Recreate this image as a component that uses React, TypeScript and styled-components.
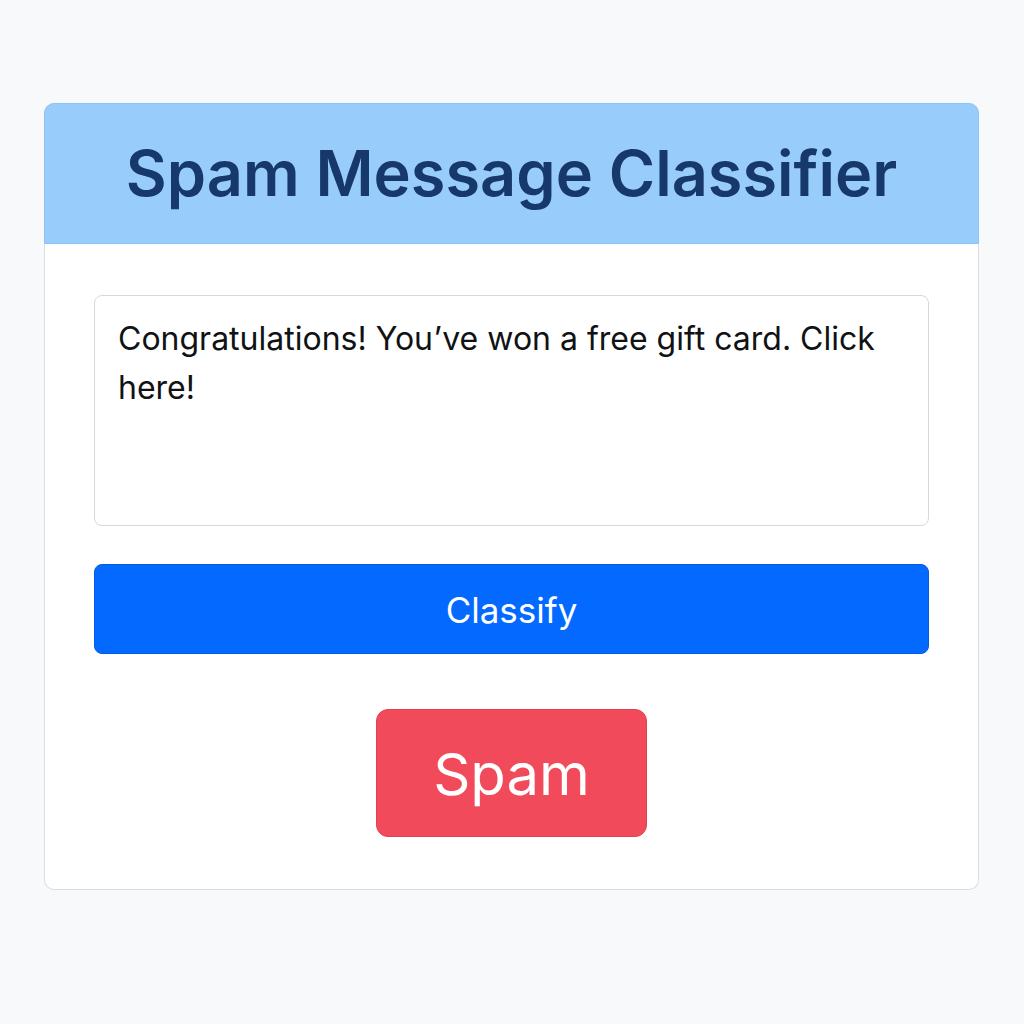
import React, { useState } from 'react';
import styled, { createGlobalStyle } from 'styled-components';

const GlobalStyle = createGlobalStyle`
  *, *::before, *::after { box-sizing: border-box; }
  body {
    margin: 0;
    background: #f7f9fb;
    font-family: Inter, "Liberation Sans", sans-serif;
  }
`;

const Page = styled.main`
  min-height: 100vh;
  padding: 103px 45px 103px 44px;
`;

const Card = styled.section`
  border-radius: 10px;
`;

const CardHeader = styled.header`
  padding: 29px 24px 30px;
  border: 1px solid #8cc3f3;
  border-radius: 10px 10px 0 0;
  background: #98cdfb;
  text-align: center;
`;

const Title = styled.h1`
  margin: 0;
  color: #17386a;
  font-size: 63px;
  line-height: 80px;
  font-weight: 600;
`;

const CardBody = styled.form`
  display: flex;
  flex-direction: column;
  padding: 51px 49px 52px;
  border: 1px solid #dadee2;
  border-top: 0;
  border-radius: 0 0 10px 10px;
  background: #ffffff;
`;

const MessageInput = styled.textarea`
  display: block;
  width: 100%;
  height: 231px;
  margin-bottom: 38px;
  padding: 18px 23px;
  border: 1px solid #d5d9dd;
  border-radius: 8px;
  background: #ffffff;
  color: #101214;
  font-family: inherit;
  font-size: 32px;
  line-height: 49px;
  resize: none;
  outline: none;
`;

const ClassifyButton = styled.button`
  width: 100%;
  padding: 21px 24px 19px;
  border: 1px solid #045be4;
  border-radius: 8px;
  background: #0469ff;
  color: #ffffff;
  font-family: inherit;
  font-size: 35px;
  line-height: 48px;
  cursor: pointer;
`;

const Result = styled.output`
  align-self: center;
  margin-top: 55px;
  padding: 28px 56px 26px;
  border: 1px solid #e34153;
  border-radius: 12px;
  background: #f14a5b;
  color: #ffffff;
  font-size: 58px;
  line-height: 72px;
`;

export default function App() {
  const [message, setMessage] = useState('Congratulations! You’ve won a free gift card. Click here!');

  return (
    <>
      <GlobalStyle />
      <Page>
        <Card>
          <CardHeader>
            <Title>Spam Message Classifier</Title>
          </CardHeader>
          <CardBody onSubmit={(event) => event.preventDefault()}>
            <MessageInput
              aria-label="Message"
              spellCheck={false}
              value={message}
              onChange={(event) => setMessage(event.target.value)}
            />
            <ClassifyButton type="submit">Classify</ClassifyButton>
            <Result>Spam</Result>
          </CardBody>
        </Card>
      </Page>
    </>
  );
}
